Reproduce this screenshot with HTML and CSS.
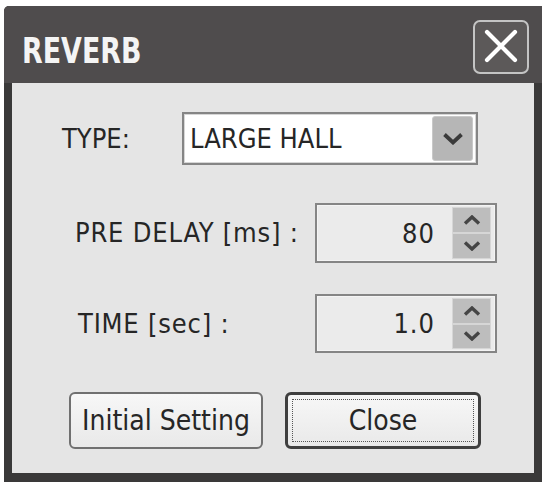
FILE: index.html
```html
<!DOCTYPE html>
<html>
<head>
<meta charset="utf-8">
<title>REVERB</title>
<link rel="stylesheet" href="styles.css">
</head>
<body>
<div class="window">
  <div class="titlebar">
    <span class="title">REVERB</span>
    <button class="xbtn" aria-label="Close">
      <svg width="52" height="50" viewBox="0 0 52 50"><path d="M12 10 L40 38 M40 10 L12 38" stroke="#fff" stroke-width="4.2" stroke-linecap="round" fill="none"/></svg>
    </button>
  </div>
  <div class="client">
    <div class="row row-type">
      <span class="label label-type">TYPE:</span>
      <div class="select">
        <span class="select-value">LARGE HALL</span>
        <span class="drop"><svg width="22" height="13" viewBox="0 0 22 13"><path d="M2.5 2.5 L11 10.5 L19.5 2.5" stroke="#3a3a3a" stroke-width="3.8" fill="none"/></svg></span>
      </div>
    </div>
    <div class="row row-spin row-pre">
      <span class="label label-spin">PRE DELAY [ms] :</span>
      <div class="spin">
        <span class="spin-value">80</span>
        <span class="spin-btns">
          <span class="spin-btn"><svg width="18" height="10" viewBox="0 0 18 10"><path d="M2 8.5 L9 2 L16 8.5" stroke="#454545" stroke-width="3.4" fill="none"/></svg></span>
          <span class="spin-btn"><svg width="18" height="10" viewBox="0 0 18 10"><path d="M2 1.5 L9 8 L16 1.5" stroke="#454545" stroke-width="3.4" fill="none"/></svg></span>
        </span>
      </div>
    </div>
    <div class="row row-spin row-time">
      <span class="label label-spin label-time">TIME [sec] :</span>
      <div class="spin">
        <span class="spin-value">1.0</span>
        <span class="spin-btns">
          <span class="spin-btn"><svg width="18" height="10" viewBox="0 0 18 10"><path d="M2 8.5 L9 2 L16 8.5" stroke="#454545" stroke-width="3.4" fill="none"/></svg></span>
          <span class="spin-btn"><svg width="18" height="10" viewBox="0 0 18 10"><path d="M2 1.5 L9 8 L16 1.5" stroke="#454545" stroke-width="3.4" fill="none"/></svg></span>
        </span>
      </div>
    </div>
    <div class="buttons">
      <button class="btn btn-initial">Initial Setting</button>
      <button class="btn btn-close"><span class="focus">Close</span></button>
    </div>
  </div>
</div>
</body>
</html>
```

FILE: styles.css
```css
html, body {
  margin: 0;
  padding: 0;
  background: #ffffff;
}
body {
  width: 542px;
  height: 482px;
  overflow: hidden;
  font-family: "DejaVu Sans Condensed", "DejaVu Sans", sans-serif;
  font-stretch: condensed;
  color: #262626;
}
.window {
  margin: 6px 0 0 4px;
  width: 538px;
  height: 476px;
  background: #3a3939;
  display: flex;
  flex-direction: column;
  border-radius: 5px 0 0 0;
}
.titlebar {
  height: 77px;
  flex: none;
  background: #4f4c4d;
  border-radius: 5px 0 0 0;
  display: flex;
  align-items: flex-start;
  padding-left: 18px;
}
.title {
  margin-top: 27px;
  font-family: "DejaVu Sans Condensed", "DejaVu Sans", sans-serif;
  font-stretch: condensed;
  font-weight: bold;
  font-size: 36px;
  line-height: 36px;
  color: #f4f4f4;
  transform: scaleX(0.83);
  transform-origin: left center;
  width: 120px;
  white-space: nowrap;
}
.xbtn {
  margin: 14px 13px 0 auto;
  width: 56px;
  height: 54px;
  padding: 0;
  border: 2px solid #c4c4c4;
  border-radius: 7px;
  background: #5c5959;
  display: flex;
  align-items: center;
  justify-content: center;
}
.client {
  flex: 1;
  margin: 0 8px 9px 8px;
  background: #e5e5e5;
  padding-top: 29px;
  box-sizing: border-box;
}
.row {
  display: flex;
  align-items: center;
}
.label {
  font-size: 27px;
  line-height: 30px;
  color: #262626;
  flex: none;
}
.row-type {
  padding-left: 50px;
  height: 53px;
}
.label-type {
  width: 120px;
}
.select {
  width: 296px;
  height: 53px;
  box-sizing: border-box;
  border: 2px solid #858585;
  box-shadow: inset 0 0 0 1px #d6d6d6;
  background: #ffffff;
  display: flex;
  align-items: center;
  padding: 3px 3px 3px 6px;
}
.select-value {
  flex: 1;
  font-size: 27px;
  color: #262626;
}
.drop {
  width: 41px;
  height: 45px;
  box-sizing: border-box;
  background: #b6b6b6;
  border: 1px solid #c9c9c9;
  border-radius: 3px;
  display: flex;
  align-items: center;
  justify-content: center;
}
.row-spin {
  padding-left: 63px;
}
.row-pre {
  margin-top: 38px;
  height: 60px;
}
.row-time {
  margin-top: 31px;
  height: 59px;
}
.label-spin {
  width: 240px;
  letter-spacing: 0.8px;
}
.label-time {
  padding-left: 3px;
  box-sizing: border-box;
}
.spin {
  width: 182px;
  height: 100%;
  box-sizing: border-box;
  border: 2px solid #858585;
  box-shadow: inset 0 0 0 1px #f4f4f4;
  background: #ebebeb;
  display: flex;
  align-items: center;
  padding: 2px 4px 2px 2px;
}
.spin-value {
  flex: 1;
  text-align: right;
  padding-right: 17px;
  font-size: 27px;
  letter-spacing: 1px;
  color: #262626;
}
.spin-btns {
  width: 39px;
  height: 100%;
  display: flex;
  flex-direction: column;
}
.spin-btn {
  flex: 1;
  background: #bdbdbd;
  border: 1px solid #d6d6d6;
  display: flex;
  align-items: center;
  justify-content: center;
}
.buttons {
  margin-top: 39px;
  padding-left: 57px;
  display: flex;
  gap: 22px;
}
.btn {
  height: 57px;
  box-sizing: border-box;
  font-family: "DejaVu Sans Condensed", "DejaVu Sans", sans-serif;
  font-stretch: condensed;
  font-size: 28px;
  color: #262626;
  background: linear-gradient(#f7f7f7, #e9e9e9);
  border-radius: 6px;
  padding: 0;
  display: flex;
  align-items: center;
  justify-content: center;
}
.btn-initial {
  width: 194px;
  border: 2px solid #707070;
}
.btn-close {
  width: 196px;
  border: 3px solid #3f3f3f;
  padding: 4px;
}
.focus {
  flex: 1;
  align-self: stretch;
  display: flex;
  align-items: center;
  justify-content: center;
  border: 1px dotted #555;
}
```
